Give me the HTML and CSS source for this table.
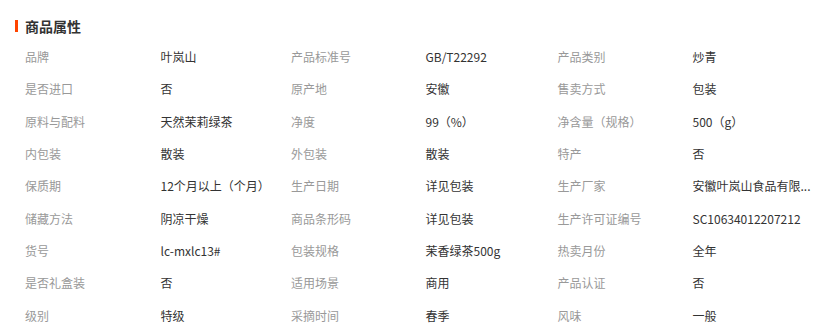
FILE: index.html
```html
<!DOCTYPE html>
<html lang="zh-CN">
<head>
<meta charset="utf-8">
<title>商品属性</title>
<link rel="stylesheet" href="styles.css">
</head>
<body>
<div class="wrap">
  <h2 class="title"><span class="bar"></span>商品属性</h2>
  <div class="attrs">
    <div class="k">品牌</div><div class="v">叶岚山</div>
    <div class="k">产品标准号</div><div class="v">GB/T22292</div>
    <div class="k">产品类别</div><div class="v">炒青</div>

    <div class="k">是否进口</div><div class="v">否</div>
    <div class="k">原产地</div><div class="v">安徽</div>
    <div class="k">售卖方式</div><div class="v">包装</div>

    <div class="k">原料与配料</div><div class="v">天然茉莉绿茶</div>
    <div class="k">净度</div><div class="v">99（%）</div>
    <div class="k">净含量（规格）</div><div class="v">500（g）</div>

    <div class="k">内包装</div><div class="v">散装</div>
    <div class="k">外包装</div><div class="v">散装</div>
    <div class="k">特产</div><div class="v">否</div>

    <div class="k">保质期</div><div class="v">12个月以上（个月）</div>
    <div class="k">生产日期</div><div class="v">详见包装</div>
    <div class="k">生产厂家</div><div class="v">安徽叶岚山食品有限...</div>

    <div class="k">储藏方法</div><div class="v">阴凉干燥</div>
    <div class="k">商品条形码</div><div class="v">详见包装</div>
    <div class="k">生产许可证编号</div><div class="v">SC10634012207212</div>

    <div class="k">货号</div><div class="v">lc-mxlc13#</div>
    <div class="k">包装规格</div><div class="v">茉香绿茶500g</div>
    <div class="k">热卖月份</div><div class="v">全年</div>

    <div class="k">是否礼盒装</div><div class="v">否</div>
    <div class="k">适用场景</div><div class="v">商用</div>
    <div class="k">产品认证</div><div class="v">否</div>

    <div class="k">级别</div><div class="v">特级</div>
    <div class="k">采摘时间</div><div class="v">春季</div>
    <div class="k">风味</div><div class="v">一般</div>
  </div>
</div>
</body>
</html>
```
FILE: styles.css
```css
html, body {
  margin: 0;
  padding: 0;
  background: #fff;
}
body {
  font-family: "Noto Sans CJK SC", "Noto Sans", sans-serif;
  font-size: 12px;
  color: #333;
}
.wrap {
  padding: 16px 10px 0 15px;
}
.title {
  display: flex;
  align-items: center;
  gap: 7px;
  margin: 0;
  height: 20px;
  line-height: 20px;
  font-size: 14px;
  font-weight: bold;
  color: #333;
}
.bar {
  display: block;
  width: 3px;
  height: 12px;
  background: #f40;
}
.attrs {
  margin-top: 5px;
  padding-left: 10px;
  display: grid;
  grid-template-columns: 135.5px 130.5px 134.5px 132px 135px 1fr;
  grid-auto-rows: 32.33px;
  align-items: center;
}
.k, .v {
  line-height: 18px;
  white-space: nowrap;
}
.k {
  color: #999;
}
.v {
  color: #333;
}
```
